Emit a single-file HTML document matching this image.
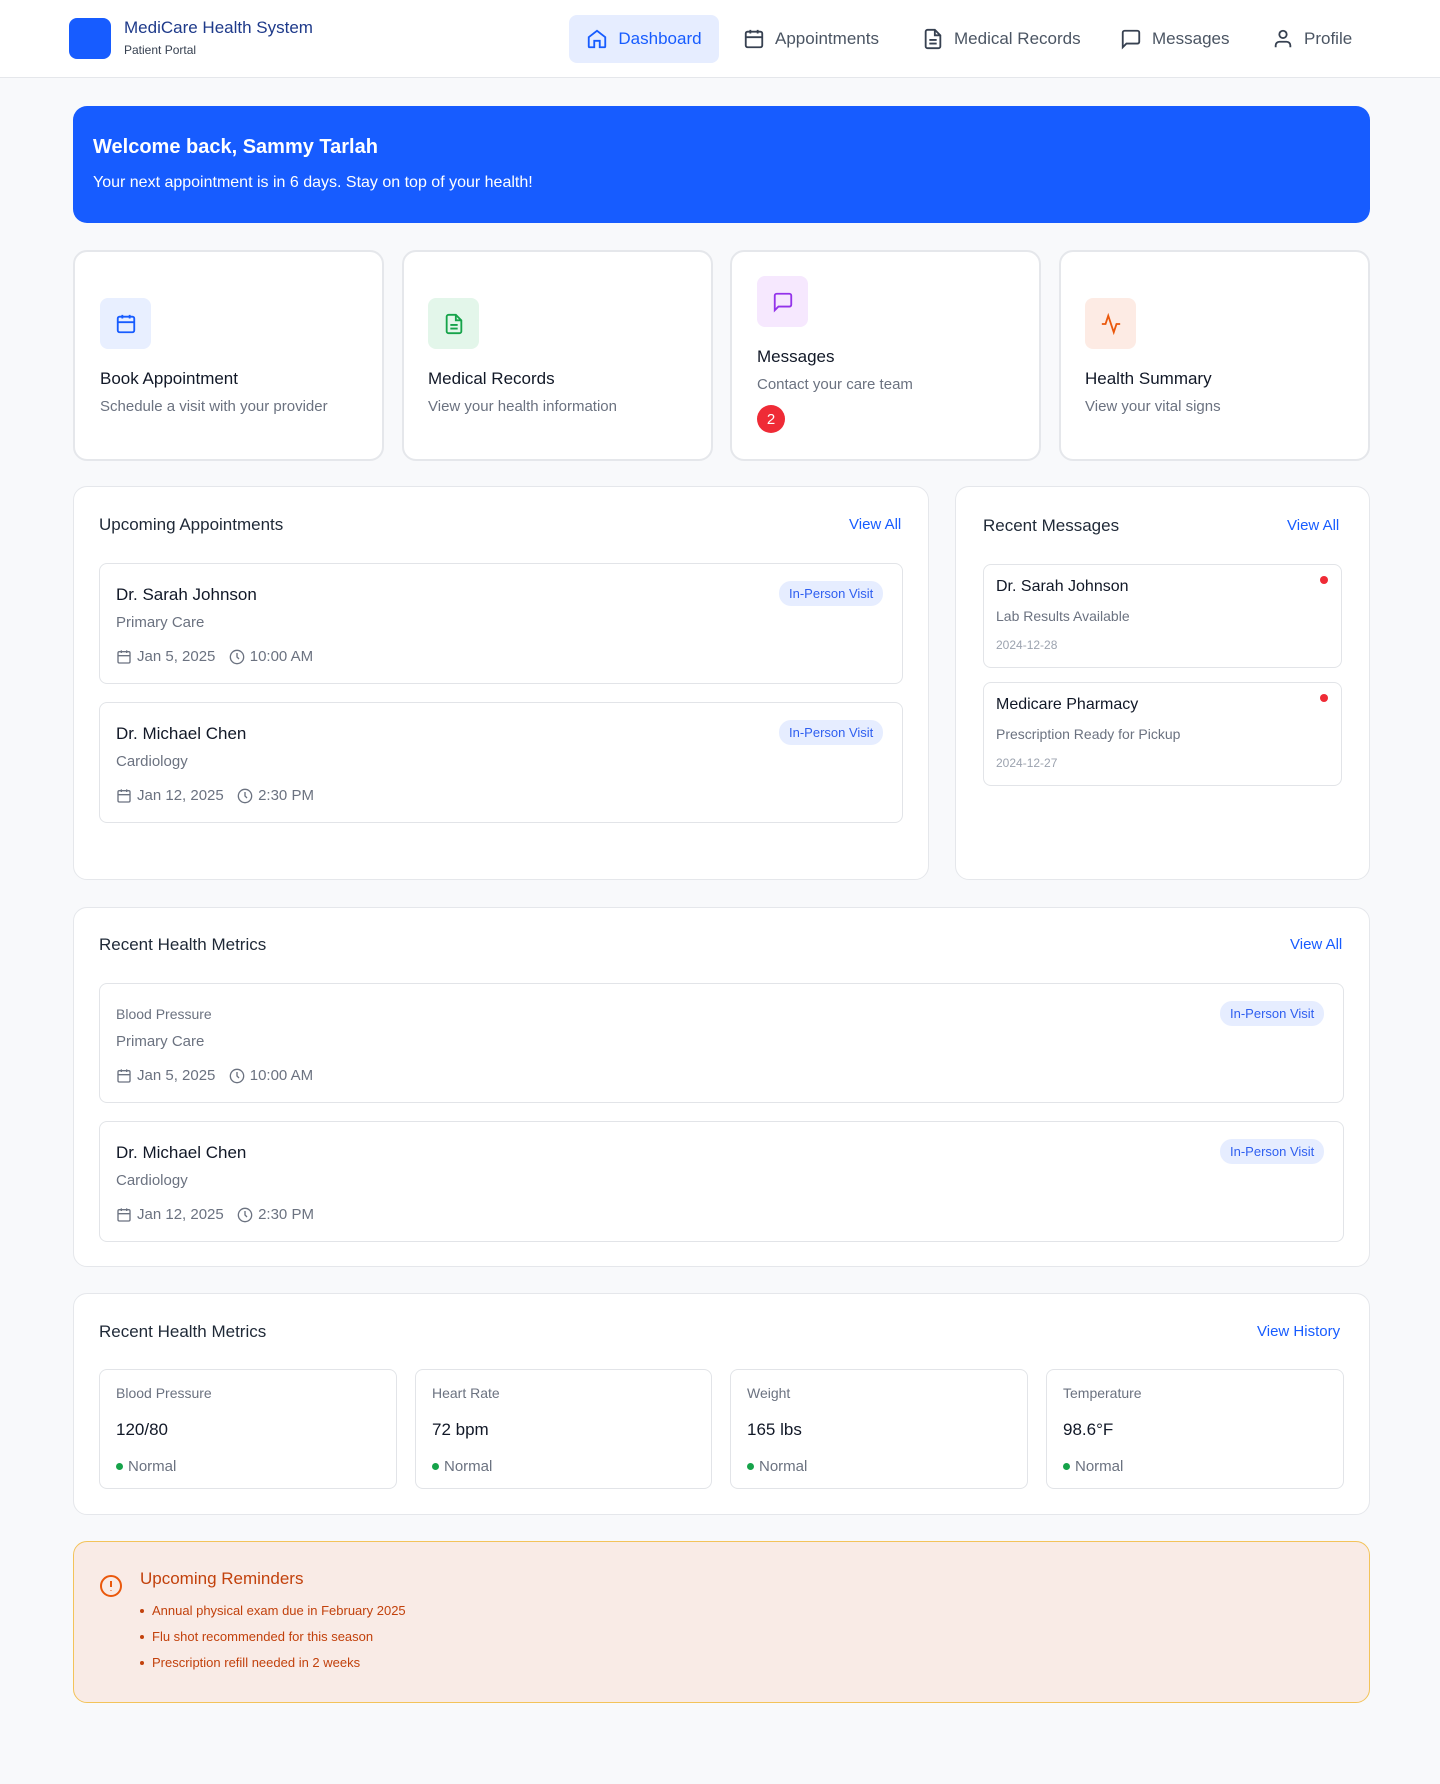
<!DOCTYPE html>
<html><head><meta charset="utf-8"><style>
*{box-sizing:border-box;margin:0;padding:0}
body{width:1440px;height:1784px;background:#f8f9fb;font-family:"Liberation Sans",sans-serif;color:#111827;position:relative;overflow:hidden}
.abs{position:absolute}
header{position:absolute;left:0;top:0;width:1440px;height:78px;background:#fff;border-bottom:1px solid #e5e7eb}
.logo{left:69px;top:18px;width:42px;height:41px;background:#175cff;border-radius:8px}
.nav{top:15px;height:48px;display:flex;align-items:center;font-size:17px;color:#4b5563;gap:10px}
.nav svg{width:22px;height:22px}
.card{position:absolute;background:#fff;border:2px solid #e5e7eb;border-radius:14px}
.panel{position:absolute;background:#fff;border:1px solid #e5e7eb;border-radius:14px}
.item{position:absolute;background:#fff;border:1px solid #e2e4e8;border-radius:8px}
.ib{position:absolute;width:51px;height:51px;border-radius:8px;display:flex;align-items:center;justify-content:center}
.ct{position:absolute;font-size:17px;color:#111827}
.cs{position:absolute;font-size:15px;color:#6b7280}
.h{position:absolute;font-size:17px;color:#1f2937}
.va{position:absolute;font-size:15px;color:#175cff}
.badge{position:absolute;background:#e6edff;color:#2f5ff0;font-size:13px;border-radius:12px;padding:5px 10px}
.nm{position:absolute;font-size:17px;color:#111827}
.sp{position:absolute;font-size:15px;color:#6b7280}
.dr{position:absolute;font-size:15px;color:#6b7280;display:flex;align-items:center;gap:5px}
.dr svg{width:16px;height:16px}
.rd{position:absolute;width:8px;height:8px;border-radius:50%;background:#ef2b36}
.st{position:absolute;font-size:15px;color:#6b7280;display:flex;align-items:center;gap:5px}
.st i{width:7px;height:7px;border-radius:50%;background:#16a34a;display:inline-block}
li{list-style:none;position:absolute;font-size:13px;color:#c2410c}
li:before{content:"";position:absolute;left:-12px;top:6px;width:4px;height:4px;border-radius:50%;background:#c2410c}
</style></head><body>
<header>
<div class="abs logo"></div>
<div class="abs" style="left:124px;top:18px;font-size:17px;color:#1e3a8a">MediCare Health System</div>
<div class="abs" style="left:124px;top:43px;font-size:12px;color:#374151">Patient Portal</div>
<div class="abs nav" style="left:569px;width:150px;background:#e6edff;border-radius:8px;justify-content:center;color:#175cff">
<svg viewBox="0 0 24 24" fill="none" stroke="#175cff" stroke-width="2"><path d="M3 10l9-7 9 7v10a1 1 0 0 1-1 1h-5v-7H9v7H4a1 1 0 0 1-1-1z"/></svg>Dashboard</div>
<div class="abs nav" style="left:743px"><svg viewBox="0 0 24 24" fill="none" stroke="#374151" stroke-width="2"><rect x="3" y="4" width="18" height="17" rx="2"/><path d="M16 2v4M8 2v4M3 10h18"/></svg>Appointments</div>
<div class="abs nav" style="left:922px"><svg viewBox="0 0 24 24" fill="none" stroke="#374151" stroke-width="2"><path d="M14 2H6a2 2 0 0 0-2 2v16a2 2 0 0 0 2 2h12a2 2 0 0 0 2-2V8z"/><path d="M14 2v6h6M8 13h8M8 17h8"/></svg>Medical Records</div>
<div class="abs nav" style="left:1120px"><svg viewBox="0 0 24 24" fill="none" stroke="#374151" stroke-width="2"><path d="M21 15a2 2 0 0 1-2 2H7l-4 4V5a2 2 0 0 1 2-2h14a2 2 0 0 1 2 2z"/></svg>Messages</div>
<div class="abs nav" style="left:1272px"><svg viewBox="0 0 24 24" fill="none" stroke="#374151" stroke-width="2"><circle cx="12" cy="7" r="4"/><path d="M4 21v-2a4 4 0 0 1 4-4h8a4 4 0 0 1 4 4v2"/></svg>Profile</div>
</header>

<div class="abs" style="left:73px;top:106px;width:1297px;height:117px;background:#175cff;border-radius:14px"></div>
<div class="abs" style="left:93px;top:136px;font-size:20px;font-weight:bold;color:#fff">Welcome back, Sammy Tarlah</div>
<div class="abs" style="left:93px;top:174px;font-size:16px;color:#fff">Your next appointment is in 6 days. Stay on top of your health!</div>

<div class="card" style="left:73px;top:250px;width:311px;height:211px"></div>
<div class="card" style="left:402px;top:250px;width:311px;height:211px"></div>
<div class="card" style="left:730px;top:250px;width:311px;height:211px"></div>
<div class="card" style="left:1059px;top:250px;width:311px;height:211px"></div>

<div class="ib" style="left:100px;top:298px;background:#e8efff"><svg width="22" height="22" viewBox="0 0 24 24" fill="none" stroke="#175cff" stroke-width="2"><rect x="3" y="4" width="18" height="17" rx="2"/><path d="M16 2v4M8 2v4M3 10h18"/></svg></div>
<div class="ct" style="left:100px;top:369px">Book Appointment</div>
<div class="cs" style="left:100px;top:398px">Schedule a visit with your provider</div>

<div class="ib" style="left:428px;top:298px;background:#e3f6ea"><svg width="22" height="22" viewBox="0 0 24 24" fill="none" stroke="#16a34a" stroke-width="2"><path d="M14 2H6a2 2 0 0 0-2 2v16a2 2 0 0 0 2 2h12a2 2 0 0 0 2-2V8z"/><path d="M14 2v6h6M8 13h8M8 17h8"/></svg></div>
<div class="ct" style="left:428px;top:369px">Medical Records</div>
<div class="cs" style="left:428px;top:398px">View your health information</div>

<div class="ib" style="left:757px;top:276px;background:#f6e8fe"><svg width="22" height="22" viewBox="0 0 24 24" fill="none" stroke="#9333ea" stroke-width="2"><path d="M21 15a2 2 0 0 1-2 2H7l-4 4V5a2 2 0 0 1 2-2h14a2 2 0 0 1 2 2z"/></svg></div>
<div class="ct" style="left:757px;top:347px">Messages</div>
<div class="cs" style="left:757px;top:376px">Contact your care team</div>
<div class="abs" style="left:757px;top:405px;width:28px;height:28px;border-radius:50%;background:#ef2b36;color:#fff;font-size:15px;display:flex;align-items:center;justify-content:center">2</div>

<div class="ib" style="left:1085px;top:298px;background:#fdebe4"><svg width="22" height="22" viewBox="0 0 24 24" fill="none" stroke="#ea580c" stroke-width="2"><path d="M22 12h-4l-3 9L9 3l-3 9H2"/></svg></div>
<div class="ct" style="left:1085px;top:369px">Health Summary</div>
<div class="cs" style="left:1085px;top:398px">View your vital signs</div>

<!-- Upcoming -->
<div class="panel" style="left:73px;top:486px;width:856px;height:394px"></div>
<div class="h" style="left:99px;top:515px">Upcoming Appointments</div>
<div class="va" style="left:849px;top:516px">View All</div>
<div class="item" style="left:99px;top:563px;width:804px;height:121px"></div>
<div class="nm" style="left:116px;top:585px">Dr. Sarah Johnson</div>
<div class="badge" style="left:779px;top:581px">In-Person Visit</div>
<div class="sp" style="left:116px;top:614px">Primary Care</div>
<div class="dr" style="left:116px;top:648px"><svg viewBox="0 0 24 24" fill="none" stroke="#6b7280" stroke-width="2"><rect x="3" y="4" width="18" height="17" rx="2"/><path d="M16 2v4M8 2v4M3 10h18"/></svg>Jan 5, 2025 &nbsp;<svg viewBox="0 0 24 24" fill="none" stroke="#6b7280" stroke-width="2"><circle cx="12" cy="12" r="10"/><path d="M12 6v6l3 3"/></svg>10:00 AM</div>
<div class="item" style="left:99px;top:702px;width:804px;height:121px"></div>
<div class="nm" style="left:116px;top:724px">Dr. Michael Chen</div>
<div class="badge" style="left:779px;top:720px">In-Person Visit</div>
<div class="sp" style="left:116px;top:753px">Cardiology</div>
<div class="dr" style="left:116px;top:787px"><svg viewBox="0 0 24 24" fill="none" stroke="#6b7280" stroke-width="2"><rect x="3" y="4" width="18" height="17" rx="2"/><path d="M16 2v4M8 2v4M3 10h18"/></svg>Jan 12, 2025 &nbsp;<svg viewBox="0 0 24 24" fill="none" stroke="#6b7280" stroke-width="2"><circle cx="12" cy="12" r="10"/><path d="M12 6v6l3 3"/></svg>2:30 PM</div>

<!-- Messages -->
<div class="panel" style="left:955px;top:486px;width:415px;height:394px"></div>
<div class="h" style="left:983px;top:516px">Recent Messages</div>
<div class="va" style="left:1287px;top:517px">View All</div>
<div class="item" style="left:983px;top:564px;width:359px;height:104px"></div>
<div class="rd" style="left:1320px;top:576px"></div>
<div class="nm" style="left:996px;top:578px;font-size:16px">Dr. Sarah Johnson</div>
<div class="sp" style="left:996px;top:608px;font-size:14px">Lab Results Available</div>
<div class="sp" style="left:996px;top:638px;font-size:12px;color:#9ca3af">2024-12-28</div>
<div class="item" style="left:983px;top:682px;width:359px;height:104px"></div>
<div class="rd" style="left:1320px;top:694px"></div>
<div class="nm" style="left:996px;top:696px;font-size:16px">Medicare Pharmacy</div>
<div class="sp" style="left:996px;top:726px;font-size:14px">Prescription Ready for Pickup</div>
<div class="sp" style="left:996px;top:756px;font-size:12px;color:#9ca3af">2024-12-27</div>

<!-- Metrics 1 -->
<div class="panel" style="left:73px;top:907px;width:1297px;height:360px"></div>
<div class="h" style="left:99px;top:935px">Recent Health Metrics</div>
<div class="va" style="left:1290px;top:936px">View All</div>
<div class="item" style="left:99px;top:983px;width:1245px;height:120px"></div>
<div class="sp" style="left:116px;top:1006px;font-size:14px">Blood Pressure</div>
<div class="badge" style="left:1220px;top:1001px">In-Person Visit</div>
<div class="sp" style="left:116px;top:1033px">Primary Care</div>
<div class="dr" style="left:116px;top:1067px"><svg viewBox="0 0 24 24" fill="none" stroke="#6b7280" stroke-width="2"><rect x="3" y="4" width="18" height="17" rx="2"/><path d="M16 2v4M8 2v4M3 10h18"/></svg>Jan 5, 2025 &nbsp;<svg viewBox="0 0 24 24" fill="none" stroke="#6b7280" stroke-width="2"><circle cx="12" cy="12" r="10"/><path d="M12 6v6l3 3"/></svg>10:00 AM</div>
<div class="item" style="left:99px;top:1121px;width:1245px;height:121px"></div>
<div class="nm" style="left:116px;top:1143px">Dr. Michael Chen</div>
<div class="badge" style="left:1220px;top:1139px">In-Person Visit</div>
<div class="sp" style="left:116px;top:1172px">Cardiology</div>
<div class="dr" style="left:116px;top:1206px"><svg viewBox="0 0 24 24" fill="none" stroke="#6b7280" stroke-width="2"><rect x="3" y="4" width="18" height="17" rx="2"/><path d="M16 2v4M8 2v4M3 10h18"/></svg>Jan 12, 2025 &nbsp;<svg viewBox="0 0 24 24" fill="none" stroke="#6b7280" stroke-width="2"><circle cx="12" cy="12" r="10"/><path d="M12 6v6l3 3"/></svg>2:30 PM</div>

<!-- Metrics 2 -->
<div class="panel" style="left:73px;top:1293px;width:1297px;height:222px"></div>
<div class="h" style="left:99px;top:1322px">Recent Health Metrics</div>
<div class="va" style="left:1257px;top:1323px">View History</div>
<div class="item" style="left:99px;top:1369px;width:298px;height:120px"></div>
<div class="item" style="left:415px;top:1369px;width:297px;height:120px"></div>
<div class="item" style="left:730px;top:1369px;width:298px;height:120px"></div>
<div class="item" style="left:1046px;top:1369px;width:298px;height:120px"></div>
<div class="sp" style="left:116px;top:1385px;font-size:14px">Blood Pressure</div>
<div class="nm" style="left:116px;top:1420px">120/80</div>
<div class="st" style="left:116px;top:1458px"><i></i>Normal</div>
<div class="sp" style="left:432px;top:1385px;font-size:14px">Heart Rate</div>
<div class="nm" style="left:432px;top:1420px">72 bpm</div>
<div class="st" style="left:432px;top:1458px"><i></i>Normal</div>
<div class="sp" style="left:747px;top:1385px;font-size:14px">Weight</div>
<div class="nm" style="left:747px;top:1420px">165 lbs</div>
<div class="st" style="left:747px;top:1458px"><i></i>Normal</div>
<div class="sp" style="left:1063px;top:1385px;font-size:14px">Temperature</div>
<div class="nm" style="left:1063px;top:1420px">98.6°F</div>
<div class="st" style="left:1063px;top:1458px"><i></i>Normal</div>

<!-- Reminders -->
<div class="abs" style="left:73px;top:1541px;width:1297px;height:162px;background:#f9ebe6;border:1px solid #f3c35a;border-radius:14px"></div>
<svg class="abs" style="left:99px;top:1574px" width="24" height="24" viewBox="0 0 24 24" fill="none" stroke="#ea580c" stroke-width="2"><circle cx="12" cy="12" r="10"/><path d="M12 7v6M12 16.5v.5"/></svg>
<div class="abs" style="left:140px;top:1569px;font-size:17px;color:#c2410c">Upcoming Reminders</div>
<ul>
<li style="left:152px;top:1603px">Annual physical exam due in February 2025</li>
<li style="left:152px;top:1629px">Flu shot recommended for this season</li>
<li style="left:152px;top:1655px">Prescription refill needed in 2 weeks</li>
</ul>
</body></html>
